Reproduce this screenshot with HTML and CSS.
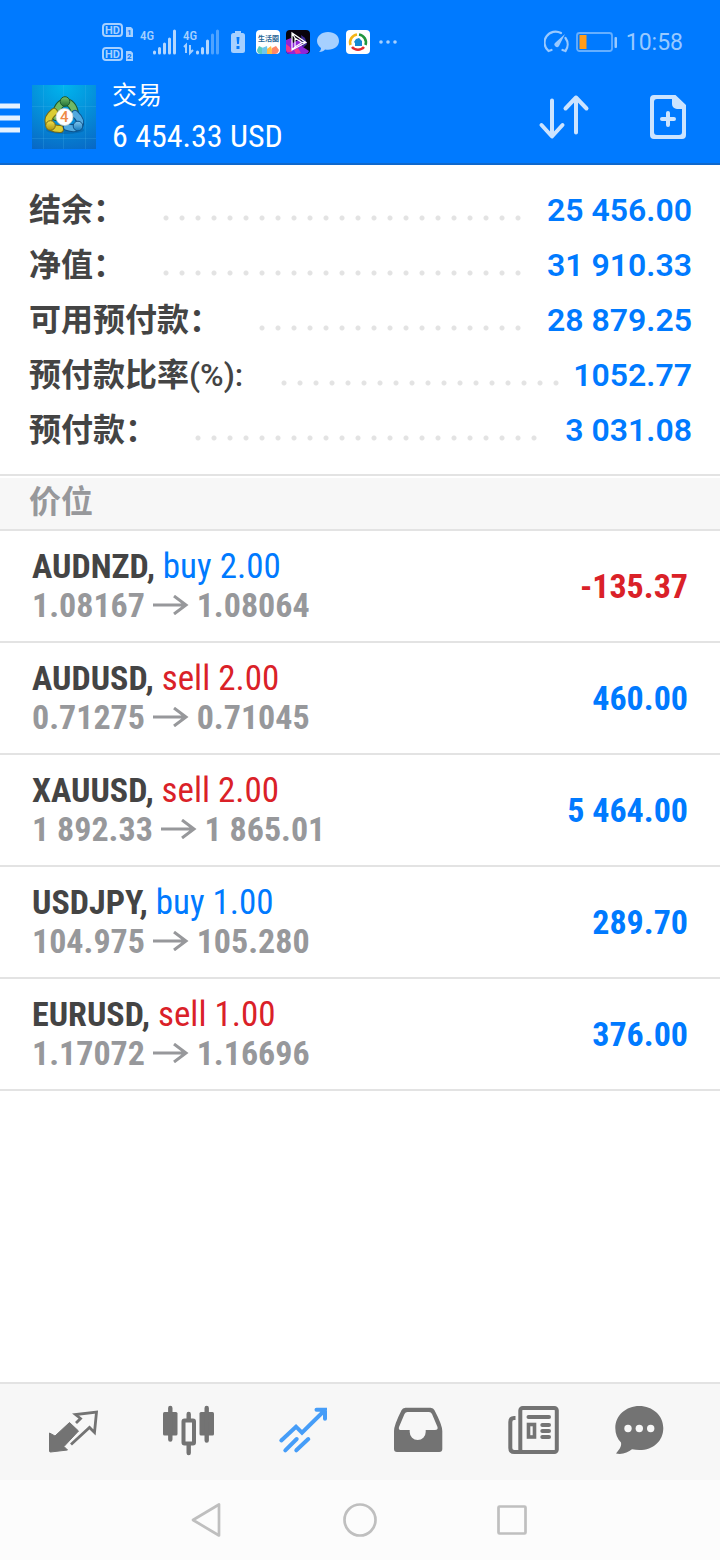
FILE: index.html
```html
<!DOCTYPE html>
<html lang="zh-CN">
<head>
<meta charset="utf-8">
<meta name="viewport" content="width=device-width, initial-scale=1">
<title>交易</title>
<link rel="stylesheet" href="styles.css">
</head>
<body>
<div class="app">
  <header class="header">
    <div class="status">
      <div class="status-group">
        <svg class="status-sim" width="32" height="42" viewBox="0 0 32 42" aria-hidden="true">
          <g fill="none" stroke="#a6d0ff" stroke-width="2"><rect x="1" y="3" width="19" height="12" rx="3"/><rect x="1" y="27" width="19" height="12" rx="3"/></g>
          <g fill="#a6d0ff"><path d="M24 6h5l2 2v8h-7zM24 30h5l2 2v8h-7z"/></g>
          <g class="tiny-bold" fill="#a6d0ff"><text x="3" y="13">HD</text><text x="3" y="37">HD</text></g>
          <g class="tiny-num" fill="#007aff"><text x="25" y="14">1</text><text x="25" y="38">2</text></g>
        </svg>
        <svg class="status-signal" width="36" height="28" viewBox="0 0 36 28" aria-hidden="true">
          <text class="net" x="0" y="12" fill="#a6d0ff">4G</text>
          <path d="M14.500 24v1M19.500 20.500v4.500M24.500 16v9M29.500 11v14M34.500 3v22" stroke="#b3d7ff" stroke-width="3" stroke-linecap="round"/>
        </svg>
        <svg class="status-signal" width="36" height="28" viewBox="0 0 36 28" aria-hidden="true">
          <text class="net" x="0" y="12" fill="#a6d0ff">4G</text>
          <path d="M1 19l2-2v8M7 17v8l3-3" fill="none" stroke="#a6d0ff" stroke-width="2"/>
          <path d="M14.500 24v1M19.500 20.500v4.500M24.500 13v12" stroke="#b3d7ff" stroke-width="3" stroke-linecap="round"/>
          <path d="M29.500 7v18M34.500 3v22" stroke="#4fa3ff" stroke-width="3" stroke-linecap="round"/>
        </svg>
        <svg class="status-alert" width="14" height="24" viewBox="0 0 14 24" aria-hidden="true">
          <path d="M4 1h6v2H4z" fill="#a6d0ff"/><rect y="3" width="14" height="20" rx="2.500" fill="#a6d0ff"/>
          <path d="M5.500 7h3l-.6 7H6.100zM5.500 16h3v3h-3z" fill="#007aff"/>
        </svg>
        <svg width="24" height="24" viewBox="0 0 24 24" aria-hidden="true">
          <rect width="24" height="24" rx="4" fill="#fff"/>
          <text class="life" x="2" y="11" fill="#2a6796">生活圈</text>
          <path d="M1 20l2-4 4 2v6H4q-3-1-3-4z" fill="#5acbc0"/><path d="M6 18l5-2 1 8H6z" fill="#6dc7ec"/><path d="M11 19l4-3 2 8h-6z" fill="#ffbd45"/><path d="M16 18l4-2 3 4q-1 4-4 4h-3z" fill="#ff8666"/>
        </svg>
        <svg width="24" height="24" viewBox="0 0 24 24" aria-hidden="true">
          <rect width="24" height="24" rx="4" fill="#08030d"/>
          <path d="M0 10l5-2 2 5 7-4 3 8 6 4q-1 3-4 3H4q-4 0-4-4z" fill="#8e26d9"/><path d="M0 14l4 3 2 5H2q-2 0-2-3zM8 20l4-2 3 5-5 1z" fill="#f0368e"/><path d="M15 5l4 3 2 6-4 4z" fill="#3d2a98"/>
          <path d="M6 3v17l14-7.500zM9 8v9l7-4.500zM6 3l3 5M20 12.500h-4M6 20l3-3" fill="none" stroke="#fff" stroke-width="1.200"/>
        </svg>
        <svg class="status-bubble" width="24" height="24" viewBox="0 0 24 24" aria-hidden="true">
          <path d="M12 2C5.500 2 1 6 1 11c0 3 2 5.500 4 7 0 2-1 3-2 4 3 0 5-1 6-2.500 8 1.500 14-3 14-8.500S18.500 2 12 2z" fill="#a6d0ff"/>
        </svg>
        <svg width="24" height="24" viewBox="0 0 24 24" aria-hidden="true">
          <rect width="24" height="24" rx="4" fill="#fff"/>
          <g fill="none" stroke-width="2.600"><path d="M4.500 15A8 8 0 0 1 11 4.500" stroke="#f5b416"/><path d="M13 4.500A8 8 0 0 1 19.500 15" stroke="#21963e"/><path d="M18 17A8 8 0 0 1 6 17" stroke="#e32b32"/></g>
          <path d="M9 16v-3l-1-1 2-3 3-1 3 3v5z" fill="#1689d4"/>
        </svg>
        <svg class="status-more" width="20" height="6" viewBox="0 0 20 6" aria-hidden="true"><g fill="#a6d0ff"><circle cx="3" cy="3" r="1.800"/><circle cx="10" cy="3" r="1.800"/><circle cx="17" cy="3" r="1.800"/></g></svg>
      </div>
      <div class="status-group status-end">
        <svg width="26" height="24" viewBox="0 0 26 24" aria-hidden="true">
          <path d="M4.500 21A11 11 0 0 1 17 3M21.500 8A11 11 0 0 1 21.500 21M4.500 21l3-1M21.500 21l-3-1" fill="none" stroke="#99c9ff" stroke-width="2.200" stroke-linecap="round"/>
          <path d="M21 4l-6 12a2.500 2.500 0 1 1-3.500-3.500z" fill="#99c9ff"/>
        </svg>
        <svg width="42" height="22" viewBox="0 0 42 22" aria-hidden="true">
          <rect x="1" y="2" width="35" height="18" rx="2.500" fill="none" stroke="#66afff" stroke-width="1.800"/><rect x="3.500" y="4" width="7" height="14" fill="#ff9c1a"/><rect x="38.500" y="6" width="2.500" height="11" rx="1" fill="#99c9ff"/>
        </svg>
        <time class="clock">10:58</time>
      </div>
    </div>
    <div class="toolbar">
      <button class="menu" type="button" aria-label="菜单"><svg width="20" height="32" viewBox="0 0 20 32"><path d="M0 4h20M0 16h20M0 28h20" stroke="#e5f2ff" stroke-width="5"/></svg></button>
      <svg class="logo" width="64" height="64" viewBox="0 0 64 64" aria-hidden="true">
        <defs>
          <radialGradient id="sky" cx=".5" cy="0" r="1.100"><stop offset="0" stop-color="#00b5ee"/><stop offset=".55" stop-color="#058bd7"/><stop offset="1" stop-color="#0868c5"/></radialGradient>
          <linearGradient id="green" x2="0" y2="1"><stop stop-color="#79c26b"/><stop offset="1" stop-color="#216f36"/></linearGradient>
          <linearGradient id="gold" x2="0" y2="1"><stop stop-color="#f5e34d"/><stop offset="1" stop-color="#a99312"/></linearGradient>
          <linearGradient id="blue" x2="0" y2="1"><stop stop-color="#83c8ef"/><stop offset="1" stop-color="#1479bd"/></linearGradient>
        </defs>
        <rect width="64" height="64" fill="url(#sky)"/>
        <path d="M11.500 0v64M31.500 0v64M53.500 0v64M0 21.500h64M0 53.500h64" stroke="#54c0ef" stroke-opacity=".2"/>
        <ellipse cx="33" cy="45" rx="19" ry="4" fill="#064a8a" opacity=".35"/>
        <g fill="none" stroke-linecap="round">
          <path d="M24 32c0-18 17-20 19-3" stroke="#1b5930" stroke-width="8"/><path d="M24 32c0-18 17-20 19-3" stroke="#6fb964" stroke-width="6"/>
          <path d="M22 27c-9 7-7 17 6 17" stroke="#776b16" stroke-width="8"/><path d="M22 27c-9 7-7 17 6 17" stroke="#dccd35" stroke-width="6"/>
          <path d="M43 29c10 9 4 17-8 13" stroke="#0d528b" stroke-width="8"/><path d="M43 29c10 9 4 17-8 13" stroke="#52a9df" stroke-width="6"/>
        </g>
        <circle cx="33" cy="16.500" r="4.800" fill="url(#green)" stroke="#1b5930"/><circle cx="18.500" cy="40.500" r="4.800" fill="url(#gold)" stroke="#776b16"/><circle cx="46" cy="41" r="4.800" fill="url(#blue)" stroke="#0d528b"/>
        <circle cx="32.500" cy="32" r="8.500" fill="#fff" stroke="#c9d1cd" stroke-width=".8"/>
        <text class="logo-num" x="28" y="37" fill="#ee8a47">4</text>
      </svg>
      <div class="heading">
        <h1 class="title">交易</h1>
        <p class="profit">6 454.33 USD</p>
      </div>
      <button class="tool" type="button" aria-label="排序"><svg width="52" height="48" viewBox="0 0 52 48"><path d="M14 7.500V43M3.500 32L14 43.500 24.500 32M38 39.500V4.500M27.500 15.500L38 4.500 48.500 15.500" fill="none" stroke="#cce4ff" stroke-width="4" stroke-linecap="round" stroke-linejoin="round"/></svg></button>
      <button class="tool" type="button" aria-label="新订单"><svg width="36" height="48" viewBox="0 0 36 48"><path d="M4 2h21.500L36 12v30a4 4 0 0 1-4 4H4a4 4 0 0 1-4-4V6a4 4 0 0 1 4-4zM7 6a3 3 0 0 0-3 3v30a3 3 0 0 0 3 3h22a3 3 0 0 0 3-3V16h-5a5 5 0 0 1-5-5V6z" fill="#cce4ff" fill-rule="evenodd"/><path d="M12 26h12M18 20v12" stroke="#cce4ff" stroke-width="4" stroke-linecap="round"/></svg></button>
    </div>
  </header>

  <main class="content">
    <dl class="summary">
      <div class="summary-row"><dt>结余：</dt><dd><span class="leader"></span>25 456.00</dd></div>
      <div class="summary-row"><dt>净值：</dt><dd><span class="leader"></span>31 910.33</dd></div>
      <div class="summary-row"><dt>可用预付款：</dt><dd><span class="leader"></span>28 879.25</dd></div>
      <div class="summary-row"><dt>预付款比率<span class="unit">(%):</span></dt><dd><span class="leader"></span>1052.77</dd></div>
      <div class="summary-row"><dt>预付款：</dt><dd><span class="leader"></span>3 031.08</dd></div>
    </dl>
    <h2 class="section">价位</h2>
    <ul class="positions">
      <li class="position"><div><p class="order">AUDNZD, <span class="side up">buy 2.00</span></p><p class="prices">1.08167 <svg class="arrow" viewBox="0 0 36 20" role="img" aria-label="到"><path d="M0 10h33M21 1l12 9-12 9" /></svg> 1.08064</p></div><strong class="result down">-135.37</strong></li>
      <li class="position"><div><p class="order">AUDUSD, <span class="side down">sell 2.00</span></p><p class="prices">0.71275 <svg class="arrow" viewBox="0 0 36 20" role="img" aria-label="到"><path d="M0 10h33M21 1l12 9-12 9" /></svg> 0.71045</p></div><strong class="result up">460.00</strong></li>
      <li class="position"><div><p class="order">XAUUSD, <span class="side down">sell 2.00</span></p><p class="prices">1 892.33 <svg class="arrow" viewBox="0 0 36 20" role="img" aria-label="到"><path d="M0 10h33M21 1l12 9-12 9" /></svg> 1 865.01</p></div><strong class="result up">5 464.00</strong></li>
      <li class="position"><div><p class="order">USDJPY, <span class="side up">buy 1.00</span></p><p class="prices">104.975 <svg class="arrow" viewBox="0 0 36 20" role="img" aria-label="到"><path d="M0 10h33M21 1l12 9-12 9" /></svg> 105.280</p></div><strong class="result up">289.70</strong></li>
      <li class="position"><div><p class="order">EURUSD, <span class="side down">sell 1.00</span></p><p class="prices">1.17072 <svg class="arrow" viewBox="0 0 36 20" role="img" aria-label="到"><path d="M0 10h33M21 1l12 9-12 9" /></svg> 1.16696</p></div><strong class="result up">376.00</strong></li>
    </ul>
  </main>

  <nav class="tabs">
    <button class="tab" type="button" aria-label="行情"><svg class="tab-icon" viewBox="0 0 64 64"><path d="M8.500 33L14 36 28.500 22.500 37.500 31 23 46.500 26.500 50 9.500 52Q8.500 52 8.500 51z" fill="#737373" stroke="#737373" stroke-linejoin="round"/><path d="M30 44.500L48.500 27.500 53.500 32.500 55.500 12 34.500 14.500 39.500 18.500 35 23" fill="none" stroke="#737373" stroke-width="2.800"/></svg></button>
    <button class="tab" type="button" aria-label="图表"><svg class="tab-icon" viewBox="0 0 64 64"><g fill="#737373"><rect x="7" y="12" width="14.500" height="23.500" rx="1.500"/><rect x="43.500" y="12" width="14.500" height="23.500" rx="1.500"/></g><rect x="27.500" y="20.500" width="10.500" height="23" rx="1" fill="none" stroke="#737373" stroke-width="4"/><path d="M14.300 8v31.500M50.700 8v32.500M32.700 14v5M32.700 45v8" stroke="#737373" stroke-width="4.400" stroke-linecap="round"/></svg></button>
    <button class="tab" type="button" aria-label="交易" aria-current="page"><svg class="tab-icon" viewBox="0 0 64 64"><path d="M10.300 40.500L25 26.700l6 6L54 10M45.500 9.800h8.500v9M14.300 50.300L25.700 39M25.300 50.300L37.300 39" fill="none" stroke="#469df8" stroke-width="4" stroke-linecap="round"/></svg></button>
    <button class="tab" type="button" aria-label="历史"><svg class="tab-icon" viewBox="0 0 64 64"><path d="M20.500 7.700h25q3 0 4 2.500Q57.300 25 57.300 31v18a3 3 0 0 1-3 3H12a3 3 0 0 1-3-3V31Q9 25 16.500 10.200q1-2.500 4-2.500zM22.500 12q-2 0-3 2L14 27q-.7 3 1.500 3H24.700v2a8 8 0 0 0 16 0v-2H50q3.300 0 2.500-3L47 14q-1-2-3-2z" fill="#737373" fill-rule="evenodd"/></svg></button>
    <button class="tab" type="button" aria-label="新闻"><svg class="tab-icon" viewBox="0 0 64 64"><g fill="none" stroke="#737373" stroke-width="4"><rect x="20.300" y="8" width="36.500" height="44" rx="2.500"/><path d="M15.500 18h-1.500q-3.700 0-3.700 4v26q0 4 4 4h8"/></g><path d="M28.500 17h20.500M42.300 25h6.700M42.300 31h6.700M42.300 37h6.700" stroke="#737373" stroke-width="4" stroke-linecap="round"/><rect x="28.500" y="24.500" width="6" height="12.500" fill="none" stroke="#737373" stroke-width="3.600"/></svg></button>
    <button class="tab" type="button" aria-label="消息"><svg class="tab-icon" viewBox="0 0 64 64"><path d="M24.300 6C11 6 .3 15.500 .3 28c0 6 2 10.500 5.700 14.500 1 4.500-3 8.500-5 11 6 1.500 12-1 16-4.200C35 53 48.300 43 48.300 28 48.300 15.500 37.500 6 24.300 6z" fill="#737373"/><g fill="#f7f7f7"><circle cx="13" cy="28.500" r="3.700"/><circle cx="24.300" cy="28.500" r="3.700"/><circle cx="35.700" cy="28.500" r="3.700"/></g></svg></button>
  </nav>
  <nav class="system">
    <button class="sys" type="button" aria-label="返回"><svg width="36" height="36" viewBox="0 0 36 36"><path d="M30 2.500v31L4 18z"/></svg></button>
    <button class="sys" type="button" aria-label="主屏幕"><svg width="36" height="36" viewBox="0 0 36 36"><circle cx="18" cy="18" r="15.500"/></svg></button>
    <button class="sys" type="button" aria-label="最近任务"><svg width="36" height="36" viewBox="0 0 36 36"><rect x="3.500" y="4.500" width="27" height="27" rx="1"/></svg></button>
  </nav>
</div>
</body>
</html>
```
FILE: styles.css
```css
* { box-sizing: border-box; }
body, h1, h2, p, dl, dd, ul { margin: 0; padding: 0; }
body {
  background: #fff;
  color: #444;
  font-family: Roboto, "Noto Sans CJK SC", sans-serif;
}
button { padding: 0; border: 0; background: none; cursor: pointer; }
svg { display: block; flex: none; }
.app { display: flex; flex-direction: column; min-height: 100vh; }

.header { background: #007aff; border-bottom: 2px solid #0f68cc; color: #fff; }
.status { display: flex; justify-content: space-between; align-items: center; height: 84px; padding: 0 37px 0 102px; }
.status-group { display: flex; align-items: center; gap: 6px; }
.status-signal { margin-right: 1px; }
.status-alert { margin: 0 5px; }
.status-more { margin-left: 2px; }
.clock { margin-left: 2px; font-size: 23px; line-height: 28px; padding-top: 2px; color: #99c9ff; }
.tiny-bold { font: bold 11px Roboto, sans-serif; }
.tiny-num { font: bold 8px Roboto, sans-serif; }
.net { font: 500 13px "Roboto Condensed", sans-serif; }
.life { font: bold 7px "Noto Sans CJK SC", sans-serif; }

.toolbar { display: flex; align-items: flex-start; padding-right: 34px; height: 79px; }
.menu { margin: 18px 12px 0 0; }
.logo { margin-top: 1px; }
.logo-num { font: 500 15px Roboto, sans-serif; }
.heading { flex: 1; padding-left: 16px; }
.title { font-size: 25px; line-height: 24px; font-weight: 400; }
.profit { font: 400 32px/56px "Roboto Condensed", sans-serif; }
.tool { margin: 9px 0 0 60px; }

.content { flex: 1; }
.summary { padding: 17px 28px 17px 29px; border-bottom: 2px solid #e3e3e3; }
.summary-row { display: flex; align-items: center; height: 55px; font-size: 32px; line-height: 40px; }
.summary-row dt { font-weight: 700; }
.unit { font-weight: 500; }
.summary-row dd { flex: 1; display: flex; color: #007aff; font-weight: 600; }
.leader { flex: 1; margin: 0 8px 0 33px; }
.leader::before {
  content: "";
  display: block;
  width: round(down, 100%, 16px);
  height: 40px;
  background: radial-gradient(circle at 8px 28px, #e3e3e3 2px, transparent 3px) 0 0 / 16px 40px repeat-x;
}
.section { margin-top: 2px; padding: 0 29px; height: 53px; border-bottom: 2px solid #e3e3e3; background: #f7f7f7; color: #97989b; font-size: 32px; line-height: 48px; font-weight: 700; }
.positions { list-style: none; }
.position { display: flex; justify-content: space-between; align-items: center; height: 112px; padding: 0 32px; border-bottom: 2px solid #e3e3e3; font: 700 34px/39px "Roboto Condensed", sans-serif; }
.side { font-size: 35px; font-weight: 400; }
.prices { color: #97989b; }
.arrow { display: inline-block; width: 36px; height: 20px; vertical-align: 2px; fill: none; stroke: #97989b; stroke-width: 3; }
.result { font-weight: 700; }
.up { color: #007aff; }
.down { color: #da2128; }

.tabs { display: grid; grid-template-columns: repeat(6, 1fr); height: 98px; padding: 0 16px; border-top: 2px solid #e3e3e3; background: #f7f7f7; }
.tab { display: flex; justify-content: center; align-items: center; }
.tab-icon { width: 64px; height: 64px; }
.system { display: flex; justify-content: center; gap: 117px; height: 80px; background: #fcfcfc; }
.sys svg { fill: none; stroke: #bfbfbf; stroke-width: 2.700px; stroke-linejoin: round; }
```
